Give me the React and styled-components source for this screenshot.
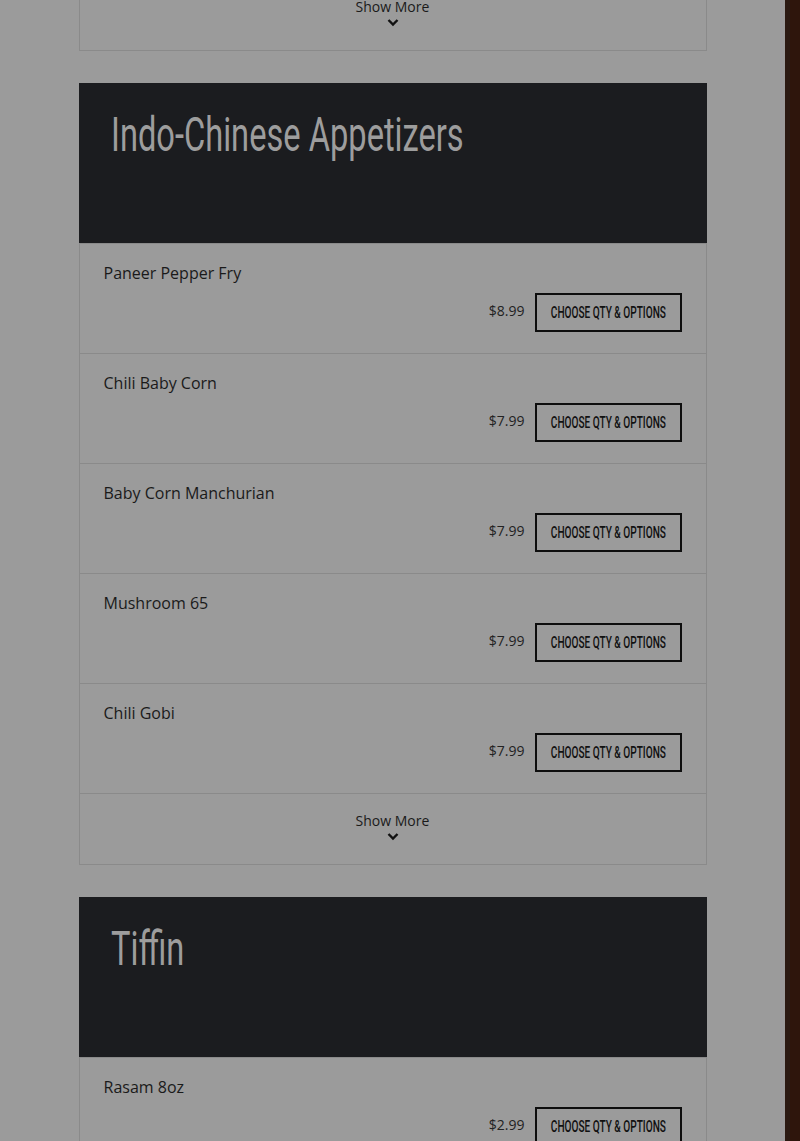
import React from "react";
import styled, { createGlobalStyle } from "styled-components";

const GlobalStyle = createGlobalStyle`
  html, body {
    margin: 0;
    padding: 0;
    background: #9b9b9b;
  }
  body {
    font-family: "Open Sans", "Noto Sans", sans-serif;
    color: #1a1a1a;
    overflow: hidden;
  }
`;

const Page = styled.div`
  display: flex;
  width: 800px;
  height: 1141px;
  overflow: hidden;
`;

const Main = styled.main`
  flex: 1;
  display: flex;
  flex-direction: column;
  align-items: center;
  gap: 32px;
`;

const SideStrip = styled.div`
  width: 15px;
  flex: none;
  background: linear-gradient(to right, #2a1911 0, #2a1911 5px, #2e150c 5px);
`;

const Card = styled.section`
  width: 628px;
  box-sizing: border-box;
  margin-top: ${props => props.offset || 0}px;
`;

const Header = styled.header`
  height: 160px;
  box-sizing: border-box;
  background: #1b1c1f;
  padding: 28px 32px;
`;

/* narrow display face: no condensed font is installed, so squeeze a plain one */
const Condensed = styled.span`
  display: inline-block;
  white-space: nowrap;
  transform: scaleX(${props => props.squeeze});
  transform-origin: ${props => props.origin || "center"};
`;

const Title = styled.h2`
  margin: 0;
  font-family: Roboto, "Liberation Sans", sans-serif;
  font-weight: 400;
  font-size: 48px;
  line-height: 48px;
  color: #9d9d9d;
`;

const List = styled.div`
  border: 1px solid #8a8a8a;
  border-top-width: ${props => (props.open ? 1 : 0)}px;
`;

const Item = styled.div`
  display: flex;
  flex-direction: column;
  padding: 17px 24px 20px;
  border-bottom: 1px solid #8a8a8a;
  height: 110px;
  box-sizing: border-box;
`;

const ItemName = styled.div`
  font-size: 16px;
  line-height: 24px;
  color: #1a1a1a;
`;

const Order = styled.div`
  display: flex;
  justify-content: flex-end;
  align-items: center;
  gap: 10px;
  margin-top: 8px;
`;

const Price = styled.span`
  font-size: 14px;
  line-height: 20px;
  color: #222;
  margin-top: -4px;
`;

const ChooseButton = styled.button`
  display: flex;
  align-items: center;
  justify-content: center;
  width: 147px;
  height: 39px;
  box-sizing: border-box;
  border: 2px solid #0e0e0e;
  background: transparent;
  color: #111;
  font-family: Roboto, "Liberation Sans", sans-serif;
  font-weight: 500;
  font-size: 16px;
  text-transform: uppercase;
  padding: 0 0 1px;
  overflow: visible;
  cursor: pointer;
`;

const ShowMore = styled.div`
  height: 70px;
  box-sizing: border-box;
  display: flex;
  flex-direction: column;
  align-items: center;
  padding-top: 17px;
  font-size: 14px;
  line-height: 20px;
  color: #1a1a1a;
`;

const Chevron = () => (
  <svg width="12" height="9" viewBox="0 0 12 9" style={{ marginTop: 1 }}>
    <polyline points="1.5,2 6,6.5 10.5,2" fill="none" stroke="#111" strokeWidth="2.4" />
  </svg>
);

const sections = [
  {
    title: "Indo-Chinese Appetizers",
    items: [
      ["Paneer Pepper Fry", "$8.99"],
      ["Chili Baby Corn", "$7.99"],
      ["Baby Corn Manchurian", "$7.99"],
      ["Mushroom 65", "$7.99"],
      ["Chili Gobi", "$7.99"],
    ],
    more: true,
  },
  {
    title: "Tiffin",
    items: [["Rasam 8oz", "$2.99"]],
  },
];

function MenuItem({ name, price }) {
  return (
    <Item>
      <ItemName>{name}</ItemName>
      <Order>
        <Price>{price}</Price>
        <ChooseButton>
          <Condensed squeeze={0.63}>Choose Qty &amp; Options</Condensed>
        </ChooseButton>
      </Order>
    </Item>
  );
}

function MoreRow() {
  return (
    <ShowMore>
      Show More
      <Chevron />
    </ShowMore>
  );
}

export default function App() {
  return (
    <>
      <GlobalStyle />
      <Page>
        <Main>
          <Card offset={-20}>
            <List>
              <MoreRow />
            </List>
          </Card>
          {sections.map(s => (
            <Card key={s.title}>
              <Header>
                <Title>
                  <Condensed squeeze={0.68} origin="left">
                    {s.title}
                  </Condensed>
                </Title>
              </Header>
              <List open>
                {s.items.map(([n, p]) => (
                  <MenuItem key={n} name={n} price={p} />
                ))}
                {s.more && <MoreRow />}
              </List>
            </Card>
          ))}
        </Main>
        <SideStrip />
      </Page>
    </>
  );
}
